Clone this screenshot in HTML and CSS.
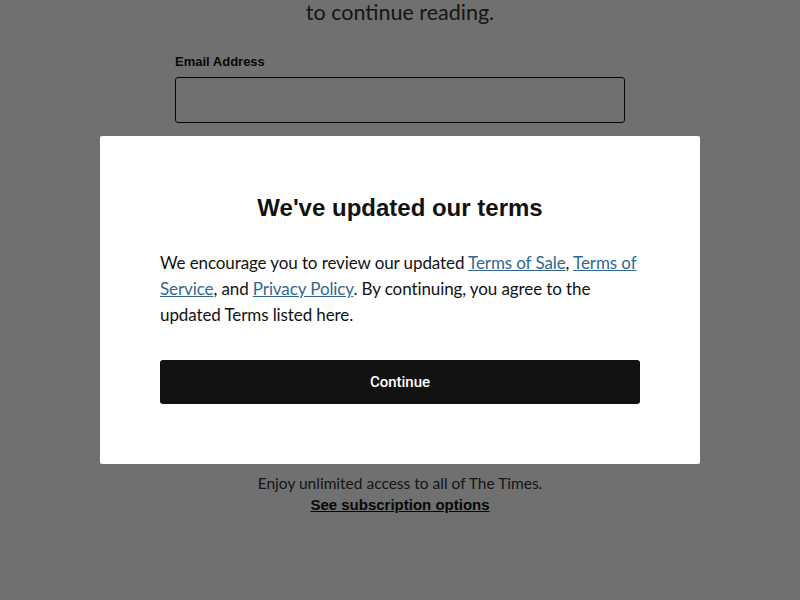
FILE: index.html
```html
<!DOCTYPE html>
<html>
<head>
<meta charset="utf-8">
<link rel="stylesheet" href="styles.css">
</head>
<body>
<main class="page">
  <p class="lede">to continue reading.</p>
  <form class="form">
    <label class="label" for="email">Email Address</label>
    <input class="input" id="email" type="email">
  </form>
  <div class="footer">
    <p class="enjoy">Enjoy unlimited access to all of The Times.</p>
    <a class="sub" href="#">See subscription options</a>
  </div>
</main>
<div class="overlay"></div>
<div class="modal">
  <h2 class="title">We've updated our terms</h2>
  <p class="text">We encourage you to review our updated <a href="#">Terms of Sale</a>, <a href="#">Terms of Service</a>, and <a href="#">Privacy Policy</a>. By continuing, you agree to the updated Terms listed here.</p>
  <button class="btn">Continue</button>
</div>
</body>
</html>
```
FILE: styles.css
```css
* { box-sizing: border-box; }
html, body { margin: 0; padding: 0; height: 100%; }
body {
  background: #fff;
  font-family: "Liberation Sans", Arial, sans-serif;
  color: #121212;
  overflow: hidden;
}
.page {
  width: 450px;
  margin: 0 auto;
  display: flex;
  flex-direction: column;
  align-items: stretch;
}
.lede {
  margin: 0;
  font-family: Lato, "Liberation Sans", sans-serif;
  font-size: 21.5px;
  line-height: 24px;
  text-align: center;
  color: #333;
}
.form {
  display: flex;
  flex-direction: column;
  margin-top: 30px;
}
.label {
  font-size: 13px;
  font-weight: bold;
  line-height: 16px;
  margin-bottom: 7px;
}
.input {
  height: 46px;
  border: 1px solid #121212;
  border-radius: 3px;
  background: #fff;
}
.footer {
  margin-top: 350px;
  text-align: center;
  color: #333;
  font-size: 15px;
}
.enjoy {
  margin: 0;
  line-height: 20px;
  font-family: Lato, "Liberation Sans", sans-serif;
  font-size: 15.5px;
}
.sub {
  display: inline-block;
  margin-top: 2px;
  font-weight: bold;
  color: #121212;
  line-height: 20px;
}
.overlay {
  position: fixed;
  inset: 0;
  background: rgba(0, 0, 0, 0.56);
}
.modal {
  position: fixed;
  left: 100px;
  top: 136px;
  width: 600px;
  height: 328px;
  background: #fff;
  border-radius: 2px;
  padding: 56px 60px 0;
  display: flex;
  flex-direction: column;
}
.title {
  margin: 0;
  font-size: 24px;
  line-height: 32px;
  font-weight: bold;
  text-align: center;
  color: #121212;
}
.text {
  margin: 26px 0 0;
  font-family: Lato, "Liberation Sans", sans-serif;
  font-size: 17px;
  letter-spacing: -0.1px;
  line-height: 26px;
  color: #121212;
}
.text a { color: #326891; }
.btn {
  margin-top: 32px;
  height: 44px;
  border: none;
  border-radius: 3px;
  background: #121212;
  color: #fff;
  font-family: Roboto, "Liberation Sans", sans-serif;
  font-size: 15px;
  font-weight: 500;
}
```
